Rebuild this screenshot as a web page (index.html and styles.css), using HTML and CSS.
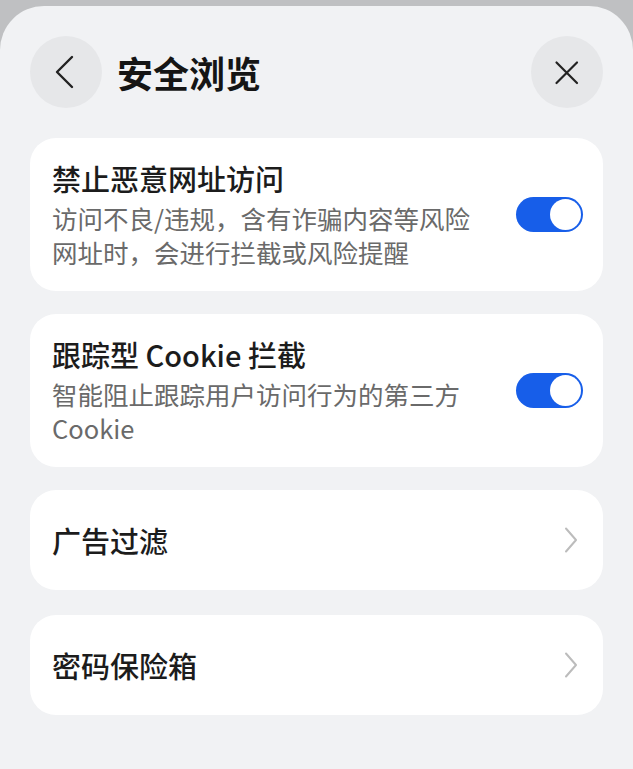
FILE: index.html
```html
<!DOCTYPE html>
<html>

<head>
    <meta charset="utf-8" />
    <title>安全浏览</title>
    <meta name="viewport" content="width=device-width, initial-scale=1">
    <link rel="stylesheet" href="styles.css">
</head>

<body>
    <div class="sheet">
        <div class="header">
            <button class="circle-btn" type="button" aria-label="返回">
                <svg width="72" height="72" viewBox="0 0 72 72">
                    <path d="M42 21 L27 36 L42 51" fill="none" stroke="#222" stroke-width="2.4" stroke-linecap="round" stroke-linejoin="round" />
                </svg>
            </button>
            <h1 class="title">安全浏览</h1>
            <button class="circle-btn close" type="button" aria-label="关闭">
                <svg width="72" height="72" viewBox="0 0 72 72">
                    <path d="M25.5 26.5 L46 47 M46 26.5 L25.5 47" fill="none" stroke="#222" stroke-width="2.2" stroke-linecap="round" />
                </svg>
            </button>
        </div>

        <div class="card">
            <div class="card-text">
                <div class="card-title">禁止恶意网址访问</div>
                <div class="card-desc">访问不良/违规，含有诈骗内容等风险网址时，会进行拦截或风险提醒</div>
            </div>
            <div class="switch on"><span class="knob"></span></div>
        </div>

        <div class="card">
            <div class="card-text">
                <div class="card-title">跟踪型 Cookie 拦截</div>
                <div class="card-desc">智能阻止跟踪用户访问行为的第三方Cookie</div>
            </div>
            <div class="switch on"><span class="knob"></span></div>
        </div>

        <div class="card row">
            <div class="card-title">广告过滤</div>
            <svg class="arrow" width="14" height="26" viewBox="0 0 14 26">
                <path d="M2 1.5 L12 13 L2 24.5" fill="none" stroke="#bcbcbc" stroke-width="2" stroke-linecap="round" stroke-linejoin="round" />
            </svg>
        </div>

        <div class="card row">
            <div class="card-title">密码保险箱</div>
            <svg class="arrow" width="14" height="26" viewBox="0 0 14 26">
                <path d="M2 1.5 L12 13 L2 24.5" fill="none" stroke="#bcbcbc" stroke-width="2" stroke-linecap="round" stroke-linejoin="round" />
            </svg>
        </div>
    </div>
</body>

</html>
```

FILE: styles.css
```css
html,
body {
    margin: 0;
    height: 100%;
}

body {
    background: #bfc0c2;
    font-family: "Noto Sans CJK SC", sans-serif;
    color: #1c1c1c;
    overflow: hidden;
}

.sheet {
    margin-top: 6px;
    min-height: calc(100% - 6px);
    box-sizing: border-box;
    padding: 30px 30px 0 30px;
    background: #f1f2f4;
    border-radius: 44px 44px 0 0;
}

.header {
    display: flex;
    align-items: center;
    height: 72px;
    margin-bottom: 30px;
}

.circle-btn {
    width: 72px;
    height: 72px;
    padding: 0;
    border: none;
    border-radius: 50%;
    background: #e6e7e9;
    display: flex;
    align-items: center;
    justify-content: center;
    flex-shrink: 0;
}

.circle-btn.close {
    margin-left: auto;
}

.title {
    margin: 0 0 0 15px;
    font-size: 36px;
    font-weight: 700;
    line-height: 72px;
    color: #151515;
}

.card {
    display: flex;
    align-items: center;
    background: #fff;
    border-radius: 26px;
    padding: 21px 20px 22px 22px;
    margin-bottom: 23px;
}

.card-text {
    flex: 1;
    min-width: 0;
}

.card-title {
    font-size: 29px;
    font-weight: 500;
    line-height: 38px;
    color: #1c1c1c;
}

.card-desc {
    margin-top: 4px;
    font-size: 25.5px;
    line-height: 34px;
    color: #6a6a6a;
}

/* plain navigation rows */
.card.row {
    height: 100px;
    box-sizing: border-box;
    padding: 0 25px 0 22px;
    justify-content: space-between;
    margin-bottom: 25px;
}

.switch {
    position: relative;
    width: 67px;
    height: 35px;
    margin-left: 24px;
    border-radius: 18px;
    background: #c9cacc;
    flex-shrink: 0;
}

.switch.on {
    background: #175ee9;
}

.knob {
    position: absolute;
    top: 2px;
    left: 2px;
    width: 31px;
    height: 31px;
    border-radius: 50%;
    background: #fff;
}

.switch.on .knob {
    left: auto;
    right: 2px;
}

.arrow {
    flex-shrink: 0;
}
```
